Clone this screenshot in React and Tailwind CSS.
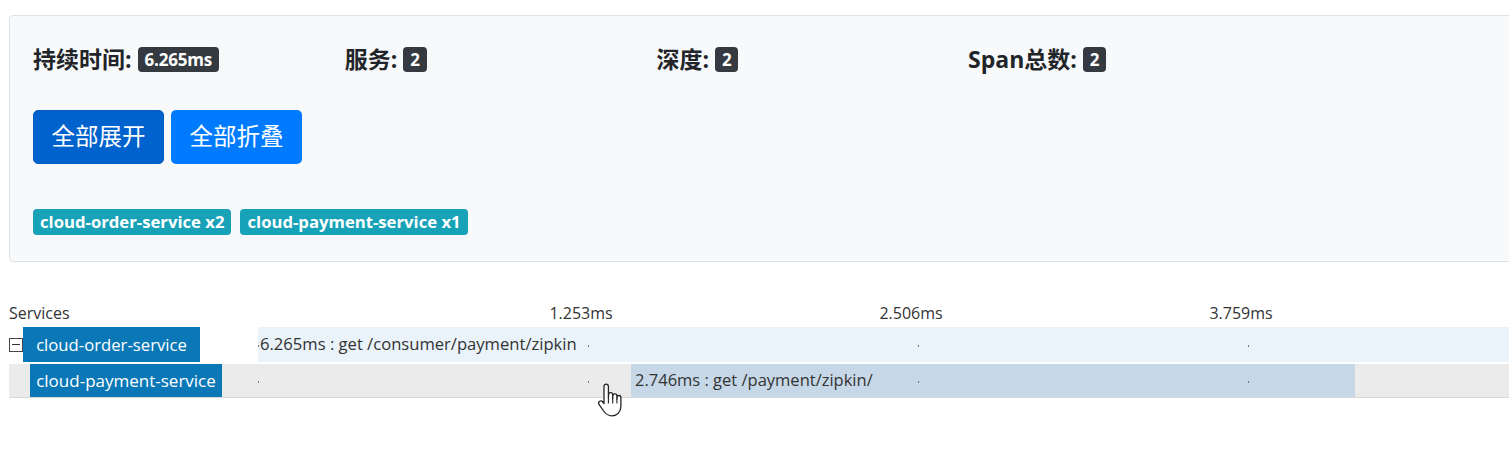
import React from 'react';

const cjk = { fontFamily: '"Open Sans", "Noto Sans CJK SC", sans-serif' };

const stats = [
  { label: '持续时间:', value: '6.265ms' },
  { label: '服务:', value: '2' },
  { label: '深度:', value: '2' },
  { label: 'Span总数:', value: '2' },
];

const ticks = [0, 330, 660, 990];

function Ticks() {
  return (
    <>
      {ticks.map((t) => (
        <span
          key={t}
          className="absolute top-1/2 w-px h-[2px] bg-[#777]"
          style={{ left: t }}
        />
      ))}
    </>
  );
}

function HandCursor() {
  return (
    <svg
      className="absolute left-[597px] top-[383px]"
      width="26"
      height="38"
      viewBox="0 0 26 38"
      fill="none"
    >
      <path
        d="M7 3.5c0-1.4 1-2.3 2.2-2.3s2.2.9 2.2 2.3V15l.2-3.2c0-1.3 1-2.1 2.1-2.1s2 .8 2 2.1v3.6l.2-2.6c0-1.2.9-2 2-2s2 .8 2 2v3.3l.2-1.8c.1-1.1.9-1.8 1.9-1.8s1.9.8 1.9 1.9v8.8c0 5.6-3.6 9.6-8.9 9.6-3.9 0-6.3-1.8-8.4-4.8L2.2 21.6c-.8-1.2-.6-2.6.4-3.3 1-.7 2.4-.4 3.2.7L7 20.6V3.5z"
        fill="#fff"
        stroke="#222"
        strokeWidth="1.3"
        strokeLinejoin="round"
      />
      <path d="M11.4 15v5M15.7 15.4v4.6M19.9 16v4" stroke="#222" strokeWidth="1.1" strokeLinecap="round" />
    </svg>
  );
}

export default function App() {
  return (
    <div className="relative w-[1509px] h-[456px] overflow-hidden bg-white pt-[15px] pl-[9px]" style={cjk}>
      {/* Summary panel */}
      <div className="w-[1540px] h-[247px] bg-[#f8f9fa] border border-[#dfe2e5] rounded-[4px] pl-[23px] pt-[30px]">
        <div className="flex h-[27px] items-center">
          {stats.map((s) => (
            <div key={s.label} className="w-[311.7px] flex items-center gap-[6px]">
              <span className="text-[23px] font-bold text-[#212529] leading-none">{s.label}</span>
              <span className="inline-flex items-center h-[25px] px-[7px] rounded-[4px] bg-[#343a40] text-white text-[17px] font-bold leading-none tracking-[-0.2px]">
                {s.value}
              </span>
            </div>
          ))}
        </div>

        <div className="flex gap-[7px] mt-[37px]">
          <button className="w-[131px] h-[54px] rounded-[5px] bg-[#0062cc] border border-[#005cbf] text-white text-[23.5px]">
            全部展开
          </button>
          <button className="w-[131px] h-[54px] rounded-[5px] bg-[#007bff] text-white text-[23.5px]">
            全部折叠
          </button>
        </div>

        <div className="flex gap-[9px] mt-[45px]">
          <span className="inline-flex items-center h-[26px] px-[7px] rounded-[4px] bg-[#17a2b8] text-white text-[16.7px] font-bold">
            cloud-order-service x2
          </span>
          <span className="inline-flex items-center h-[26px] px-[7px] rounded-[4px] bg-[#17a2b8] text-white text-[16.7px] font-bold">
            cloud-payment-service x1
          </span>
        </div>
      </div>

      {/* Timeline */}
      <div className="mt-[39px] text-[#333] text-[16px]" style={{ fontFamily: '"Open Sans", sans-serif' }}>
        <div className="flex h-[24px] items-center">
          <div className="w-[249px]">Services</div>
          <div className="relative flex-1 h-full">
            {['1.253ms', '2.506ms', '3.759ms'].map((l, i) => (
              <span
                key={l}
                className="absolute top-0 -translate-x-1/2"
                style={{ left: 323 + i * 330 }}
              >
                {l}
              </span>
            ))}
          </div>
        </div>

        <div className="flex h-[35px] mt-[2px] bg-white">
          <div className="w-[249px] flex items-center">
            <span className="w-[14px] h-[14px] border border-[#444] flex items-center justify-center">
              <span className="w-[8px] h-px bg-[#333]" />
            </span>
            <span className="w-[177px] h-[35px] flex items-center justify-center bg-[#0a78b7] text-white text-[16.7px]">
              cloud-order-service
            </span>
          </div>
          <div className="relative flex-1 bg-[#eaf2fa] flex items-center">
            <Ticks />
            <span className="pl-[2px] text-[16.6px] text-[#333]">6.265ms : get /consumer/payment/zipkin</span>
          </div>
        </div>

        <div className="flex h-[36px] bg-[#ebebeb] border-t-[2px] border-white border-b border-b-[#d8d8d8]">
          <div className="w-[249px] flex items-center pl-[21px]">
            <span className="w-[192px] h-[33px] flex items-center justify-center bg-[#0a78b7] text-white text-[17px]">
              cloud-payment-service
            </span>
          </div>
          <div className="relative flex-1 flex">
            <Ticks />
            <div className="ml-[373px] w-[724px] bg-[#c6d8e7] flex items-center">
              <span className="pl-[4px] text-[16.5px] text-[#333]">2.746ms : get /payment/zipkin/</span>
            </div>
          </div>
        </div>
      </div>

      <HandCursor />
    </div>
  );
}
